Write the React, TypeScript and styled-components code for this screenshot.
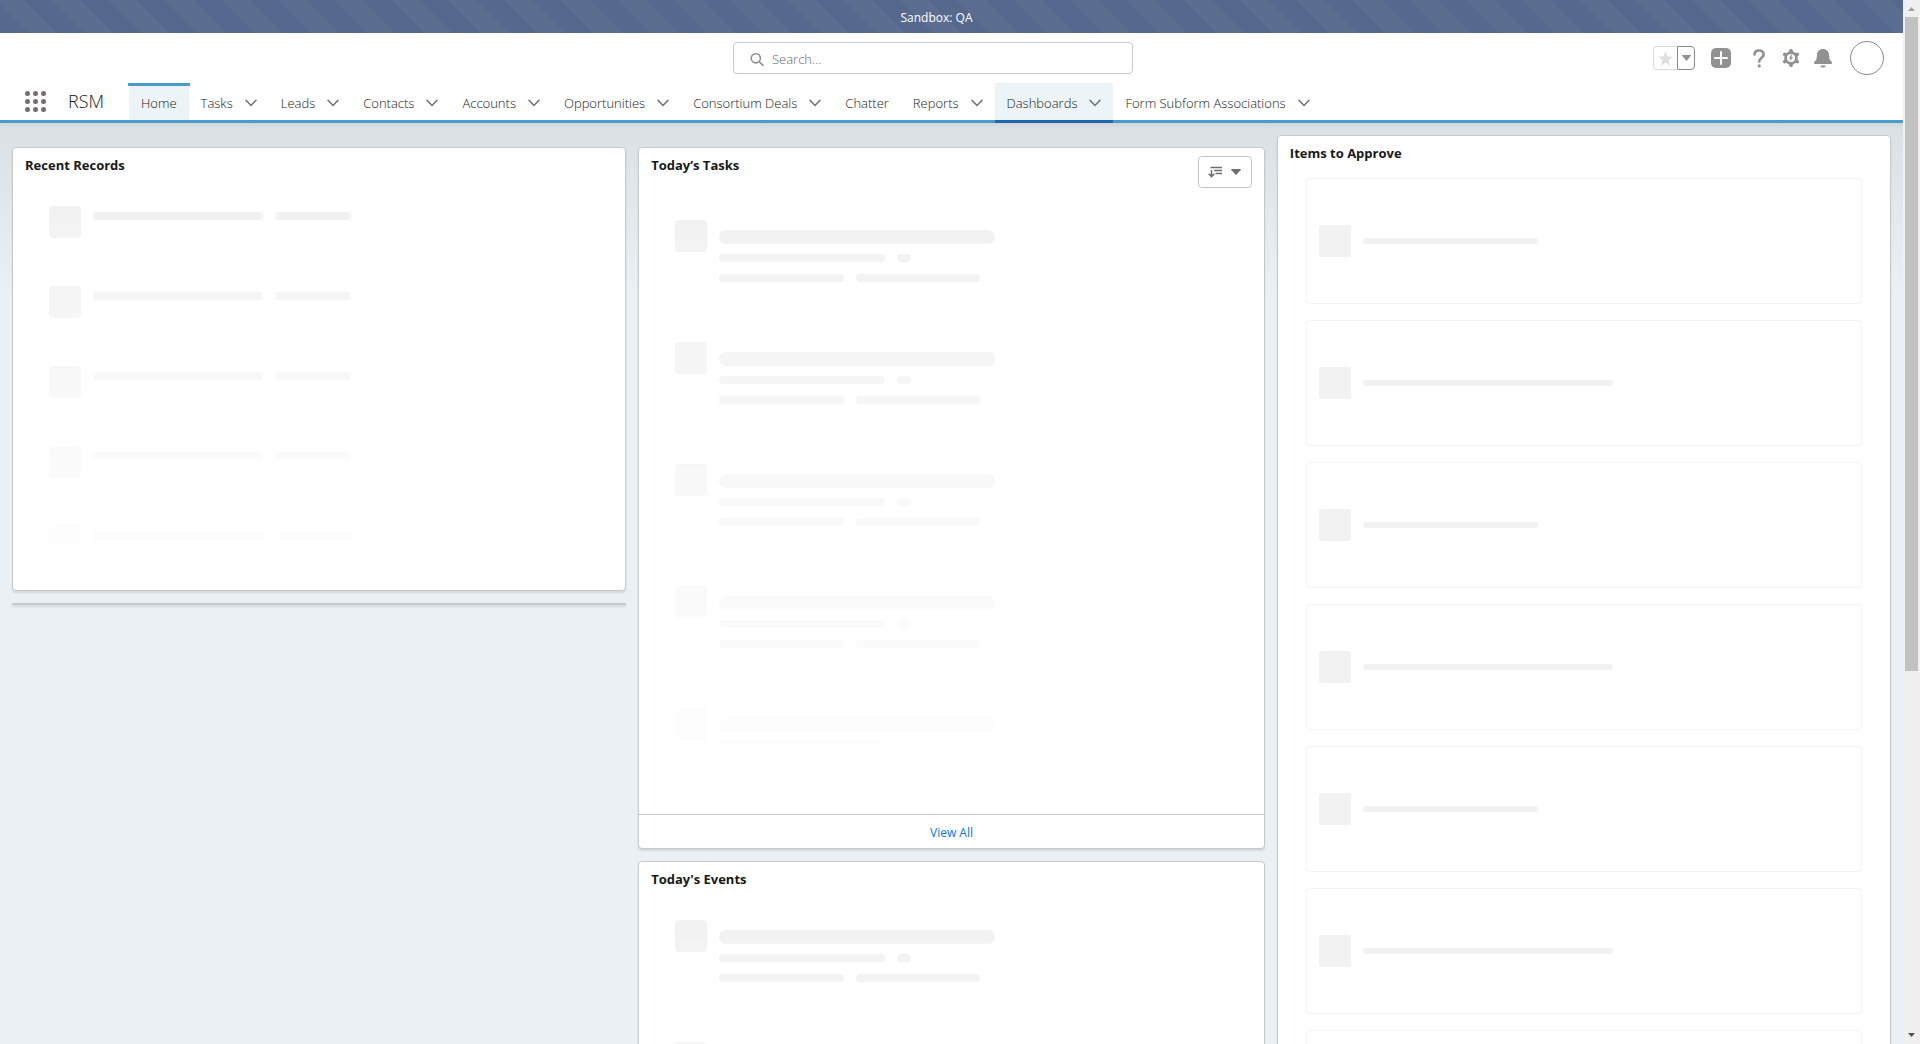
import React from "react";
import styled, { createGlobalStyle, css } from "styled-components";

const GlobalStyle = createGlobalStyle`
  *, *::before, *::after { box-sizing: border-box; }
  html, body { margin: 0; height: 100%; overflow: hidden; }
  body {
    font-family: "Open Sans", "Noto Sans", sans-serif;
    font-size: 13px;
    line-height: 20px;
    font-weight: 300;
    color: #181818;
    background: #ebf0f4;
  }
  h1, h2, ul, p { margin: 0; padding: 0; font: inherit; list-style: none; }
  a { color: inherit; text-decoration: none; }
  button { font: inherit; color: inherit; background: none; border: 0; padding: 0; cursor: pointer; }
`;

const Window = styled.div`
  display: flex;
  height: 100vh;
`;

const Page = styled.div`
  flex: 1;
  min-width: 0;
  display: flex;
  flex-direction: column;
  overflow: hidden;
`;

/* Scrollbar */

const ScrollTrack = styled.div`
  flex: none;
  width: 17px;
  padding: 0 2px;
  display: flex;
  flex-direction: column;
  align-items: center;
  background: #f0f0f0;
`;

const ScrollArrow = styled.svg`
  flex: none;
  width: 13px;
  height: 17px;
`;

const ScrollRail = styled.div`
  flex: 1;
  width: 100%;
  display: grid;
  grid-template-rows: 11fr 6fr;
`;

const ScrollThumb = styled.div`
  background: #c1c1c1;
`;

/* Header */

const Banner = styled.div`
  flex: none;
  height: 33px;
  padding: 2px 30px 0 0;
  display: flex;
  align-items: center;
  justify-content: center;
  font-size: 12px;
  font-weight: 400;
  color: #fff;
  background: repeating-linear-gradient(45deg, #54698d 0 20px, #5b6e90 20px 40px);
`;

const Header = styled.header`
  flex: none;
  background: #fff;
  border-bottom: 3px solid #4b9bca;
  box-shadow: 0 2px 4px rgba(0, 0, 0, 0.07);
  position: relative;
`;

const UtilityRow = styled.div`
  display: flex;
  align-items: center;
  height: 50px;
  padding-right: 19px;
`;

const LogoArea = styled.div`
  flex: none;
  width: 213px;
`;

const SearchArea = styled.form`
  flex: 1;
  display: flex;
  justify-content: center;
`;

const SearchBox = styled.label`
  display: flex;
  align-items: center;
  gap: 8px;
  width: 400px;
  height: 32px;
  padding: 1px 16px 0;
  border: 1px solid #c9c9c9;
  border-radius: 4px;
  background: #fff;
`;

const SearchInput = styled.input`
  flex: 1;
  min-width: 0;
  border: 0;
  padding: 0;
  outline: 0;
  font: inherit;
  line-height: 20px;
  background: none;
  &::placeholder { color: #666; opacity: 1; }
`;

const Actions = styled.div`
  flex: none;
  display: flex;
  align-items: center;
  color: #919191;
`;

const FavoriteGroup = styled.div`
  display: flex;
  height: 24px;
  margin-right: 16px;
`;

const FavoriteButton = styled.button`
  width: 24px;
  display: grid;
  place-items: center;
  border: 1px solid #dddbda;
  border-right: 0;
  border-radius: 4px 0 0 4px;
  color: #dfdfdf;
`;

const FavoriteMenu = styled.button`
  width: 18px;
  display: grid;
  place-items: center;
  border: 1px solid #8a8a8a;
  border-radius: 0 4px 4px 0;
`;

const ActionButton = styled.button<{ $size: number; $after: number }>`
  display: grid;
  place-items: center;
  width: ${(p) => p.$size}px;
  height: 20px;
  margin-right: ${(p) => p.$after}px;
`;

const Avatar = styled.button`
  width: 34px;
  height: 34px;
  border: 1px solid #8a8a8a;
  border-radius: 50%;
`;

/* Navigation */

const NavRow = styled.div`
  display: flex;
  height: 37px;
`;

const Launcher = styled.button`
  width: 21px;
  margin: 0 22px 0 25px;
  display: grid;
  place-items: center;
`;

const AppName = styled.h1`
  width: 60px;
  line-height: 37px;
  font-size: 18px;
`;

const MainNav = styled.nav`
  display: flex;
`;

const Tabs = styled.ul`
  display: flex;
`;

const Tab = styled.li<{ $state?: "active" | "hover" }>`
  position: relative;
  display: flex;
  align-items: center;
  padding: 2px 12px 0;
  gap: 12px;
  white-space: nowrap;
  ${(p) => p.$state && css`background: #ecf4f7;`}
  ${(p) =>
    p.$state === "active" &&
    css`
      margin: 0 0 0 1px;
      &::before {
        content: "";
        position: absolute;
        inset: 0 -1px auto;
        height: 3px;
        background: #4b9bca;
      }
    `}
  ${(p) =>
    p.$state === "hover" &&
    css`
      &::after {
        content: "";
        position: absolute;
        inset: auto 0 -3px;
        height: 3px;
        background: #2267a8;
      }
    `}
`;

const TabMenu = styled.button`
  display: grid;
  place-items: center;
  width: 12px;
  height: 20px;
  color: #706e6b;
`;

/* Dashboard */

const Main = styled.main`
  flex: 1;
  min-height: 0;
  padding: 12px;
  display: grid;
  grid-template-columns: 49fr 50fr 49fr;
  gap: 12px;
  align-items: start;
  background: linear-gradient(#dce1e5 0, #dee3e7 32px, #ebf0f4 168px);
`;

const Column = styled.div<{ $lowered?: boolean }>`
  display: flex;
  flex-direction: column;
  gap: 12px;
  padding-top: ${(p) => (p.$lowered ? 12 : 0)}px;
`;

const Card = styled.section`
  display: flex;
  flex-direction: column;
  border: 1px solid #c6c8ca;
  border-radius: 4px;
  background: #fff;
  box-shadow: 0 2px 2px rgba(0, 0, 0, 0.1);
`;

const EmptyCard = styled.div`
  height: 2px;
  background: #c6c8ca;
  box-shadow: 0 2px 2px rgba(0, 0, 0, 0.1);
`;

const CardHeader = styled.div`
  display: flex;
  justify-content: space-between;
  align-items: flex-start;
  padding: 8px 12px 2px;
`;

const CardTitle = styled.h2`
  line-height: 18px;
  font-weight: 700;
`;

const SortButton = styled.button`
  display: flex;
  align-items: center;
  justify-content: center;
  gap: 9px;
  width: 54px;
  height: 32px;
  border: 1px solid #c6c6c6;
  border-radius: 4px;
  color: #706e6b;
`;

const CardFooter = styled.a`
  display: block;
  border-top: 1px solid #c9c9c9;
  padding: 8px 0 5px;
  text-align: center;
  font-size: 12px;
  font-weight: 400;
  color: #0b76d3;
`;

/* Loading placeholders */

const StencilList = styled.ul`
  padding: 30px 36px 0;
  mask-image: linear-gradient(#000 30px, transparent);
`;

const StencilRow = styled.li<{ $pitch: number }>`
  display: flex;
  gap: 12px;
  height: ${(p) => p.$pitch}px;
  &:last-child { height: ${(p) => p.$pitch - 16}px; }
`;

const Block = styled.span<{ $radius?: number }>`
  flex: none;
  width: 32px;
  height: 32px;
  border-radius: ${(p) => p.$radius ?? 4}px;
  background: #f2f2f2;
`;

const Bar = styled.span<{ $width: number; $height?: number }>`
  display: block;
  width: ${(p) => p.$width}px;
  height: ${(p) => p.$height ?? 8}px;
  border-radius: 8px;
  background: #f2f2f2;
`;

const BarLine = styled.div`
  display: flex;
  gap: 12px;
  height: 10px;
`;

const BarStack = styled.div<{ $top: number }>`
  display: grid;
  align-content: start;
  padding-top: ${(p) => p.$top}px;
  gap: 10px;
`;

const ApprovalList = styled.ul`
  display: grid;
  gap: 16px;
  padding: 14px 28px 28px;
`;

const Approval = styled.li`
  display: flex;
  align-items: center;
  gap: 12px;
  height: 126px;
  padding: 0 12px;
  border: 1px solid #f3f3f3;
  border-radius: 4px;
`;

const Chevron = () => (
  <svg width="12" height="8" viewBox="0 0 12 8" fill="none" stroke="currentColor" strokeWidth="1.5" strokeLinecap="round">
    <path d="M1 1.2 6 6.4 11 1.2" />
  </svg>
);

const Caret = ({ width = 9 }: { width?: number }) => (
  <svg width={width} height="6" viewBox="0 0 9 6" preserveAspectRatio="none" fill="currentColor">
    <path d="M.6 0h7.8q.9 0 .4.7L5 5.6q-.5.6-1 0L.2.7Q-.3 0 .6 0z" />
  </svg>
);

const tabs: { name: string; menu: boolean; state?: "active" | "hover" }[] = [
  { name: "Home", menu: false, state: "active" },
  { name: "Tasks", menu: true },
  { name: "Leads", menu: true },
  { name: "Contacts", menu: true },
  { name: "Accounts", menu: true },
  { name: "Opportunities", menu: true },
  { name: "Consortium Deals", menu: true },
  { name: "Chatter", menu: false },
  { name: "Reports", menu: true },
  { name: "Dashboards", menu: true, state: "hover" },
  { name: "Form Subform Associations", menu: true },
];

const rows = [0, 1, 2, 3, 4];
const approvals = [175, 250, 175, 250, 175, 250, 175, 250];

const RecordStencil = () => (
  <StencilList aria-hidden="true">
    {rows.map((n) => (
      <StencilRow key={n} $pitch={80}>
        <Block />
        <BarStack $top={6}>
          <BarLine>
            <Bar $width={170} />
            <Bar $width={76} />
          </BarLine>
        </BarStack>
      </StencilRow>
    ))}
  </StencilList>
);

const ActivityStencil = () => (
  <StencilList aria-hidden="true">
    {rows.map((n) => (
      <StencilRow key={n} $pitch={122}>
        <Block />
        <BarStack $top={10}>
          <Bar $width={276} $height={14} />
          <BarLine>
            <Bar $width={166} />
            <Bar $width={14} />
          </BarLine>
          <BarLine>
            <Bar $width={125} />
            <Bar $width={124} />
          </BarLine>
        </BarStack>
      </StencilRow>
    ))}
  </StencilList>
);

export default function App() {
  return (
    <>
      <GlobalStyle />
      <Window>
        <Page>
          <Banner>Sandbox: QA</Banner>
          <Header>
            <UtilityRow>
              <LogoArea />
              <SearchArea role="search">
                <SearchBox>
                  <svg width="14" height="14" viewBox="0 0 14 14" fill="none" stroke="#8e8e8e" strokeWidth="1.6" strokeLinecap="round">
                    <circle cx="5.8" cy="6.3" r="4.6" />
                    <path d="m9.4 9.9 3.6 3.4" />
                  </svg>
                  <SearchInput type="text" placeholder="Search..." aria-label="Search" />
                </SearchBox>
              </SearchArea>
              <Actions>
                <FavoriteGroup>
                  <FavoriteButton aria-label="Add favorite">
                    <svg width="15" height="15" viewBox="0 0 15 15" fill="currentColor">
                      <path d="m7.5 0 1.9 5.5H15l-4.5 3.6 1.7 5.7-4.7-3.4-4.7 3.4 1.7-5.7L0 5.5h5.6z" />
                    </svg>
                  </FavoriteButton>
                  <FavoriteMenu aria-label="Favorites list">
                    <Caret />
                  </FavoriteMenu>
                </FavoriteGroup>
                <ActionButton $size={20} $after={22} aria-label="Global actions">
                  <svg width="20" height="20" viewBox="0 0 20 20">
                    <rect width="20" height="20" rx="5" fill="currentColor" />
                    <path d="M10 4v12M4 10h12" stroke="#fff" strokeWidth="2" strokeLinecap="round" />
                  </svg>
                </ActionButton>
                <ActionButton $size={12} $after={17} aria-label="Help">
                  <svg width="12" height="19" viewBox="0 0 12 19" fill="none" stroke="currentColor" strokeWidth="2.7" strokeLinecap="round">
                    <path d="M1.5 5.4C1.6 3 3.4 1.5 6 1.5s4.6 1.6 4.6 4c0 3.4-4.4 3.5-4.4 6.9" />
                    <path d="M6.2 16.9v.1" strokeWidth="3.2" />
                  </svg>
                </ActionButton>
                <ActionButton $size={18} $after={14} aria-label="Setup">
                  <svg width="18" height="18" viewBox="0 0 18 18">
                    <g fill="currentColor">
                      <circle cx="9" cy="9" r="6.8" />
                      {[0, 60, 120].map((angle) => (
                        <rect key={angle} x="7.2" y="0" width="3.6" height="18" rx="1.5" transform={`rotate(${angle} 9 9)`} />
                      ))}
                    </g>
                    <circle cx="9" cy="9" r="4" fill="#fff" />
                    <path d="M9.3 5.7 6.9 9.4h1.8l-.8 3 3.2-4.1H9.3l1.1-2.6z" fill="currentColor" />
                  </svg>
                </ActionButton>
                <ActionButton $size={18} $after={18} aria-label="Notifications">
                  <svg width="18" height="19" viewBox="0 0 18 19" fill="currentColor">
                    <path d="M9 0C5.4 0 3.2 2.5 3 5.8 2.8 9.3 2.5 11.2.9 12.3.2 12.8 0 13.3 0 14v.2q0 .8.8.8h16.4q.8 0 .8-.8V14c0-.7-.2-1.2-.9-1.7-1.6-1.1-1.9-3-2.1-6.5C14.8 2.5 12.6 0 9 0z" />
                    <path d="M6.6 16.6h4.8q.4 0 .2.4c-.5 1-1.4 1.6-2.6 1.6s-2.1-.6-2.6-1.6q-.2-.4.2-.4z" />
                  </svg>
                </ActionButton>
                <Avatar aria-label="View profile" />
              </Actions>
            </UtilityRow>
            <NavRow>
              <Launcher aria-label="App launcher">
                <svg width="21" height="21" viewBox="0 0 21 21" fill="#706e6b">
                  {[2.5, 10.5, 18.5].map((y) =>
                    [2.5, 10.5, 18.5].map((x) => <circle key={`${x}-${y}`} cx={x} cy={y} r="2.5" />)
                  )}
                </svg>
              </Launcher>
              <AppName>RSM</AppName>
              <MainNav aria-label="Main">
                <Tabs>
                  {tabs.map((tab) => (
                    <Tab key={tab.name} $state={tab.state}>
                      <a href="#">{tab.name}</a>
                      {tab.menu && (
                        <TabMenu aria-label={`${tab.name} list`}>
                          <Chevron />
                        </TabMenu>
                      )}
                    </Tab>
                  ))}
                </Tabs>
              </MainNav>
            </NavRow>
          </Header>
          <Main>
            <Column $lowered>
              <Card>
                <CardHeader>
                  <CardTitle>Recent Records</CardTitle>
                </CardHeader>
                <RecordStencil />
              </Card>
              <EmptyCard />
            </Column>
            <Column $lowered>
              <Card>
                <CardHeader>
                  <CardTitle>Today’s Tasks</CardTitle>
                  <SortButton aria-label="Sort tasks">
                    <svg width="14" height="12" viewBox="0 0 14 12" fill="none" stroke="currentColor" strokeWidth="1.5">
                      <path d="M2.5 1.5H14M6 4.5h8M7.5 7.5H14M3.5 4v6.5M.7 7.8l2.8 2.8 2.8-2.8" />
                    </svg>
                    <Caret width={10} />
                  </SortButton>
                </CardHeader>
                <ActivityStencil />
                <CardFooter href="#">View All</CardFooter>
              </Card>
              <Card>
                <CardHeader>
                  <CardTitle>Today's Events</CardTitle>
                </CardHeader>
                <ActivityStencil />
              </Card>
            </Column>
            <Column>
              <Card>
                <CardHeader>
                  <CardTitle>Items to Approve</CardTitle>
                </CardHeader>
                <ApprovalList aria-hidden="true">
                  {approvals.map((width, n) => (
                    <Approval key={n}>
                      <Block $radius={2} />
                      <Bar $width={width} $height={6} />
                    </Approval>
                  ))}
                </ApprovalList>
              </Card>
            </Column>
          </Main>
        </Page>
        <ScrollTrack aria-hidden="true">
          <ScrollArrow viewBox="0 0 13 17">
            <path d="M3 11h7L6.5 7z" fill="#a3a3a3" />
          </ScrollArrow>
          <ScrollRail>
            <ScrollThumb />
          </ScrollRail>
          <ScrollArrow viewBox="0 0 13 17">
            <path d="M3 6h7L6.5 10z" fill="#505050" />
          </ScrollArrow>
        </ScrollTrack>
      </Window>
    </>
  );
}
